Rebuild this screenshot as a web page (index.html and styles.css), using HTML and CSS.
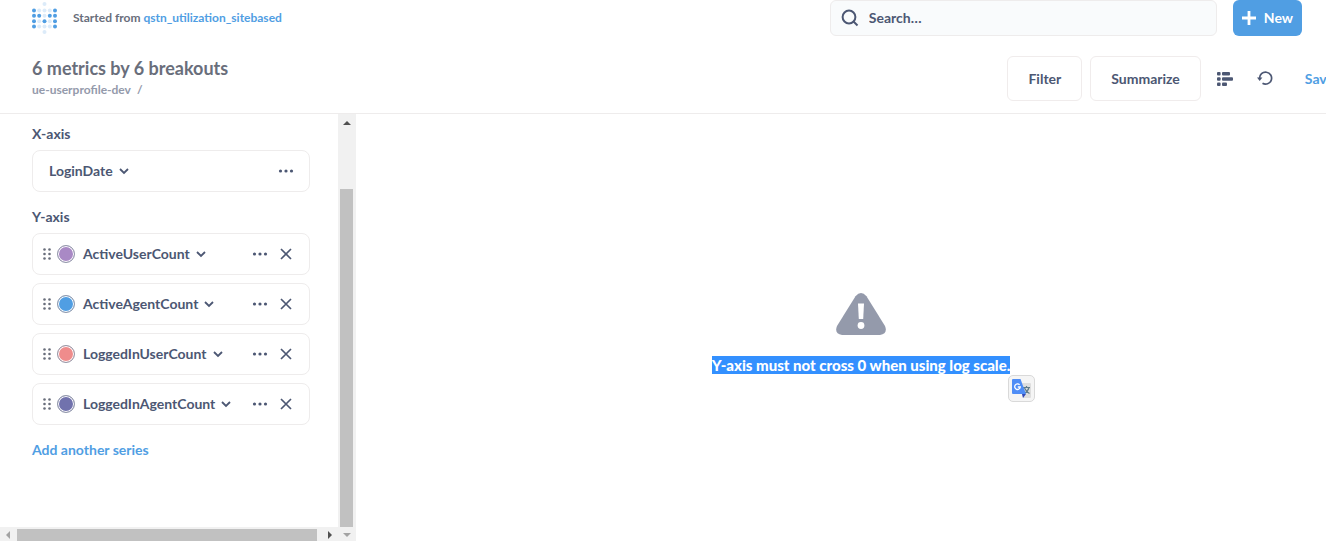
FILE: index.html
```html
<!DOCTYPE html>
<html lang="en">
<head>
    <meta charset="UTF-8">
    <meta name="viewport" content="width=device-width, initial-scale=1.0">
    <title>6 metrics by 6 breakouts</title>
    <link rel="stylesheet" href="styles.css">
</head>
<body>

    <!-- shared icons -->
    <svg class="sprite" aria-hidden="true">
        <symbol id="icon-chevron" viewBox="0 0 10 10">
            <path d="M1 3l4 4 4-4" fill="none" stroke="currentColor" stroke-width="1.8"/>
        </symbol>
        <symbol id="icon-dots" viewBox="0 0 16 16">
            <g fill="currentColor"><circle cx="2.5" cy="8" r="1.6"/><circle cx="8" cy="8" r="1.6"/><circle cx="13.5" cy="8" r="1.6"/></g>
        </symbol>
        <symbol id="icon-close" viewBox="0 0 12 12">
            <path d="M1 1l10 10M11 1L1 11" fill="none" stroke="currentColor" stroke-width="1.7"/>
        </symbol>
        <symbol id="icon-grabber" viewBox="0 0 8 12">
            <g fill="currentColor">
                <circle cx="1.5" cy="1.5" r="1.3"/><circle cx="6.5" cy="1.5" r="1.3"/>
                <circle cx="1.5" cy="6" r="1.3"/><circle cx="6.5" cy="6" r="1.3"/>
                <circle cx="1.5" cy="10.5" r="1.3"/><circle cx="6.5" cy="10.5" r="1.3"/>
            </g>
        </symbol>
    </svg>

    <header class="header">
        <div class="topbar">
            <a class="logo" href="#" aria-label="Home">
                <svg width="25" height="32" viewBox="0 0 25 32">
                    <g fill="#509ee3">
                        <circle cx="2" cy="8.5" r="2"/><circle cx="23" cy="8.5" r="2"/>
                        <circle cx="2" cy="13.8" r="2"/><circle cx="7.2" cy="13.8" r="2"/><circle cx="17.8" cy="13.8" r="2"/><circle cx="23" cy="13.8" r="2"/>
                        <circle cx="2" cy="19.2" r="2"/><circle cx="12.5" cy="19.2" r="2"/><circle cx="23" cy="19.2" r="2"/>
                        <circle cx="2" cy="24.5" r="2"/><circle cx="23" cy="24.5" r="2"/>
                    </g>
                    <g fill="#dcebf9">
                        <circle cx="12.5" cy="2" r="2"/>
                        <circle cx="7.2" cy="8.5" r="2"/><circle cx="12.5" cy="8.5" r="2"/><circle cx="17.8" cy="8.5" r="2"/>
                        <circle cx="12.5" cy="13.8" r="2"/>
                        <circle cx="7.2" cy="19.2" r="2"/><circle cx="17.8" cy="19.2" r="2"/>
                        <circle cx="7.2" cy="24.5" r="2"/><circle cx="12.5" cy="24.5" r="2"/><circle cx="17.8" cy="24.5" r="2"/>
                        <circle cx="12.5" cy="30" r="2"/>
                    </g>
                </svg>
            </a>
            <p class="started">Started from <a href="#">qstn_utilization_sitebased</a></p>
            <label class="search">
                <svg width="18" height="18" viewBox="0 0 18 18" fill="none" stroke="currentColor" stroke-width="2">
                    <circle cx="8" cy="8" r="6.4"/>
                    <path d="M12.5 12.5l4 4"/>
                </svg>
                <input type="search" placeholder="Search…" aria-label="Search">
            </label>
            <button class="new-button">
                <svg width="14" height="14" viewBox="0 0 14 14"><path d="M7 0v14M0 7h14" stroke="currentColor" stroke-width="2.8"/></svg>
                New
            </button>
        </div>

        <div class="querybar">
            <div class="question">
                <h1>6 metrics by 6 breakouts</h1>
                <p><a href="#">ue-userprofile-dev</a><span>/</span></p>
            </div>
            <div class="actions">
                <button class="outlined">Filter</button>
                <button class="outlined">Summarize</button>
                <button class="icon-button editor-button" aria-label="Show editor">
                    <svg width="16" height="14" viewBox="0 0 16 14" fill="currentColor">
                        <rect x="0" y="0" width="3.6" height="3.6" rx="1"/><rect x="5" y="0" width="8" height="3.6" rx="1"/>
                        <rect x="0" y="5.2" width="3.6" height="3.6" rx="1"/><rect x="5" y="5.2" width="11" height="3.6" rx="1"/>
                        <rect x="0" y="10.4" width="3.6" height="3.6" rx="1"/><rect x="5" y="10.4" width="5" height="3.6" rx="1"/>
                    </svg>
                </button>
                <button class="icon-button refresh-button" aria-label="Refresh">
                    <svg width="16" height="16" viewBox="0 0 16 16">
                        <path d="M2.6 7.500a6 6 0 1 1 2.900 4.800" fill="none" stroke="currentColor" stroke-width="1.700"/>
                        <path d="M0 6.500h5.400L2.700 10z" fill="currentColor"/>
                    </svg>
                </button>
                <button class="save-button">Save</button>
            </div>
        </div>
    </header>

    <div class="content">
        <aside class="sidebar">
            <div class="settings">
                <h2>X-axis</h2>
                <div class="field field-x">
                    <button class="field-name">LoginDate <svg width="10" height="10"><use href="#icon-chevron"/></svg></button>
                    <button class="icon-button" aria-label="LoginDate options"><svg width="16" height="16"><use href="#icon-dots"/></svg></button>
                </div>

                <h2>Y-axis</h2>
                <div class="series">
                    <div class="field">
                        <svg class="grabber" width="8" height="12"><use href="#icon-grabber"/></svg>
                        <button class="swatch swatch-lilac" aria-label="ActiveUserCount color"></button>
                        <button class="field-name">ActiveUserCount <svg width="10" height="10"><use href="#icon-chevron"/></svg></button>
                        <button class="icon-button" aria-label="ActiveUserCount options"><svg width="16" height="16"><use href="#icon-dots"/></svg></button>
                        <button class="icon-button remove" aria-label="Remove ActiveUserCount"><svg width="12" height="12"><use href="#icon-close"/></svg></button>
                    </div>
                    <div class="field">
                        <svg class="grabber" width="8" height="12"><use href="#icon-grabber"/></svg>
                        <button class="swatch swatch-blue" aria-label="ActiveAgentCount color"></button>
                        <button class="field-name">ActiveAgentCount <svg width="10" height="10"><use href="#icon-chevron"/></svg></button>
                        <button class="icon-button" aria-label="ActiveAgentCount options"><svg width="16" height="16"><use href="#icon-dots"/></svg></button>
                        <button class="icon-button remove" aria-label="Remove ActiveAgentCount"><svg width="12" height="12"><use href="#icon-close"/></svg></button>
                    </div>
                    <div class="field">
                        <svg class="grabber" width="8" height="12"><use href="#icon-grabber"/></svg>
                        <button class="swatch swatch-red" aria-label="LoggedInUserCount color"></button>
                        <button class="field-name">LoggedInUserCount <svg width="10" height="10"><use href="#icon-chevron"/></svg></button>
                        <button class="icon-button" aria-label="LoggedInUserCount options"><svg width="16" height="16"><use href="#icon-dots"/></svg></button>
                        <button class="icon-button remove" aria-label="Remove LoggedInUserCount"><svg width="12" height="12"><use href="#icon-close"/></svg></button>
                    </div>
                    <div class="field">
                        <svg class="grabber" width="8" height="12"><use href="#icon-grabber"/></svg>
                        <button class="swatch swatch-indigo" aria-label="LoggedInAgentCount color"></button>
                        <button class="field-name">LoggedInAgentCount <svg width="10" height="10"><use href="#icon-chevron"/></svg></button>
                        <button class="icon-button" aria-label="LoggedInAgentCount options"><svg width="16" height="16"><use href="#icon-dots"/></svg></button>
                        <button class="icon-button remove" aria-label="Remove LoggedInAgentCount"><svg width="12" height="12"><use href="#icon-close"/></svg></button>
                    </div>
                </div>
                <a class="add-series" href="#">Add another series</a>
            </div>

            <!-- scrollbars -->
            <div class="scroll-y">
                <svg width="8" height="4" viewBox="0 0 8 4"><path d="M0 4l4-4 4 4z" fill="#505050"/></svg>
                <div class="thumb"></div>
            </div>
            <div class="scroll-x">
                <svg width="4" height="8" viewBox="0 0 4 8"><path d="M4 0L0 4l4 4z" fill="#a3a3a3"/></svg>
                <div class="thumb"></div>
                <svg width="4" height="8" viewBox="0 0 4 8"><path d="M0 0l4 4-4 4z" fill="#505050"/></svg>
            </div>
            <div class="scroll-corner">
                <svg width="8" height="4" viewBox="0 0 8 4"><path d="M0 0l4 4 4-4z" fill="#a3a3a3"/></svg>
            </div>
        </aside>

        <main class="chart">
            <svg width="50" height="42" viewBox="0 0 50 42">
                <path d="M19.5 3.2Q25-3 30.5 3.2L49 33q3 8-5 9H6q-8-1-5-9z" fill="#949aab"/>
                <path d="M22 10.500h6l-.8 15.500h-4.400z" fill="#fff"/>
                <circle cx="25" cy="32.500" r="3.400" fill="#fff"/>
            </svg>
            <div class="message">
                <span class="selected">Y-axis must not cross 0 when using log scale.</span>
                <button class="translate" aria-label="Translate">
                    <svg width="19" height="19" viewBox="0 0 19 19">
                        <path d="M7 4h11q1 0 1 1v13q0 1-1 1h-7z" fill="#dedede"/>
                        <path d="M11 8.500h7M14.500 7v1.500M17 8.500q-1 4-5 6M12.500 9q1.500 3.500 5 5.500" fill="none" stroke="#607d8b" stroke-width="1.200"/>
                        <path d="M10 15h4l-3 4z" fill="#3349b5"/>
                        <path d="M1 0h7.500l5.500 15H1q-1 0-1-1V1q0-1 1-1z" fill="#4f8df6"/>
                        <path d="M7.600 5.800A2.800 2.800 0 1 0 8.300 8H5.800" fill="none" stroke="#fff" stroke-width="1.300"/>
                    </svg>
                </button>
            </div>
        </main>
    </div>

</body>
</html>
```
FILE: styles.css
```css
* {
    box-sizing: border-box;
}
body {
    margin: 0;
    height: 100vh;
    display: flex;
    flex-direction: column;
    overflow: hidden;
    background: #fff;
    color: #4c5773;
    font-family: Lato, sans-serif;
    font-size: 14px;
    font-weight: bold;
    line-height: 16px;
}
h1, h2, p {
    margin: 0;
}
a {
    color: #509ee3;
    text-decoration: none;
}
button, input {
    font: inherit;
    color: inherit;
    border: none;
    background: none;
    padding: 0;
}
button {
    cursor: pointer;
}
svg {
    display: block;
    flex: none;
}
.sprite {
    position: absolute;
    width: 0;
    height: 0;
}

/* header */
.header {
    border-bottom: 1px solid #eeecec;
}
.topbar {
    display: flex;
    align-items: center;
    height: 36px;
    padding: 0 24px 0 32px;
}
.started {
    margin: 0 auto 0 16px;
    font-size: 12px;
    color: #696e7b;
}
.search {
    display: flex;
    align-items: center;
    gap: 10px;
    flex: 0 1 387px;
    height: 36px;
    padding: 0 10px;
    border: 1px solid #eeecec;
    border-radius: 6px;
    background: #f9fbfc;
}
.search input {
    flex: 1;
    min-width: 0;
    outline: none;
}
.search input::placeholder {
    color: #4c5773;
    opacity: 1;
}
.new-button {
    display: flex;
    align-items: center;
    gap: 8px;
    height: 36px;
    margin-left: 16px;
    padding: 0 9px;
    border-radius: 6px;
    background: #509ee3;
    color: #fff;
}
.querybar {
    display: flex;
    align-items: center;
    justify-content: space-between;
    height: 77px;
    padding: 8px 0 0 32px;
    overflow: hidden;
}
.question {
    padding-bottom: 2px;
}
.question h1 {
    font-size: 18px;
    line-height: 24px;
    color: #696e7b;
}
.question p {
    display: flex;
    gap: 6px;
    font-size: 12px;
    line-height: 20px;
    color: #949aab;
}
.question p a {
    color: #949aab;
}
.actions {
    display: flex;
    align-items: center;
    margin-right: -8px;
}
.outlined {
    height: 45px;
    margin-right: 8px;
    padding: 0 20px;
    border: 1px solid #f0ecec;
    border-radius: 6px;
}
.editor-button {
    margin: 0 24px 0 8px;
}
.refresh-button {
    margin-right: 32px;
}
.save-button {
    color: #509ee3;
}

/* content */
.content {
    flex: 1;
    display: flex;
    min-height: 0;
}
.sidebar {
    display: grid;
    grid-template-columns: 1fr 18px;
    grid-template-rows: 1fr 14px;
    width: 356px;
    flex: none;
}
.settings {
    padding: 12px 28px 0 32px;
    overflow: hidden;
}
.settings h2 {
    margin-bottom: 8px;
    font-size: 14px;
}
.field {
    display: flex;
    align-items: center;
    height: 42px;
    padding: 0 17px 0 10px;
    border: 1px solid #eeecec;
    border-radius: 8px;
}
.field-x {
    margin-bottom: 17px;
    padding: 0 15px 0 16px;
}
.series {
    display: grid;
    gap: 8px;
}
.grabber {
    color: #696e7b;
}
.swatch {
    width: 18px;
    height: 18px;
    margin: 0 8px 0 6px;
    border: 1px solid #949aab;
    border-radius: 50%;
    box-shadow: inset 0 0 0 1px #fff;
}
.swatch-lilac {
    background: #a989c5;
}
.swatch-blue {
    background: #509ee3;
}
.swatch-red {
    background: #ef8c8c;
}
.swatch-indigo {
    background: #7172ad;
}
.field-name {
    display: flex;
    align-items: center;
    gap: 6px;
    margin-right: auto;
}
.remove {
    margin-left: 12px;
}
.add-series {
    display: inline-block;
    margin-top: 17px;
}

/* scrollbars */
.scroll-y, .scroll-x {
    display: flex;
    align-items: center;
    background: #f1f1f1;
}
.scroll-y {
    flex-direction: column;
    padding: 7px 3px 0 2px;
}
.scroll-y .thumb {
    flex: 1;
    width: 100%;
    margin-top: 64px;
}
.scroll-x {
    padding: 2px 6px 0 6px;
}
.scroll-x .thumb {
    flex: 1;
    height: 100%;
    margin: 0 11px 0 7px;
}
.thumb {
    background: #c1c1c1;
}
.scroll-corner {
    display: flex;
    justify-content: center;
    padding-top: 6px;
    background: #f1f1f1;
}

/* chart error */
.chart {
    flex: 1;
    display: flex;
    flex-direction: column;
    align-items: center;
    justify-content: center;
    gap: 20px;
    padding: 12px 0 0 40px;
}
.message {
    position: relative;
    font-size: 15px;
    font-weight: 900;
    line-height: 20px;
}
.selected {
    background: #3390ff;
    color: #fff;
}
.translate {
    position: absolute;
    top: 100%;
    left: 100%;
    display: flex;
    align-items: center;
    justify-content: center;
    width: 27px;
    height: 27px;
    margin-left: -2px;
    border: 1px solid #d9d9d9;
    border-radius: 5px;
    background: #f5f5f5;
}
```
